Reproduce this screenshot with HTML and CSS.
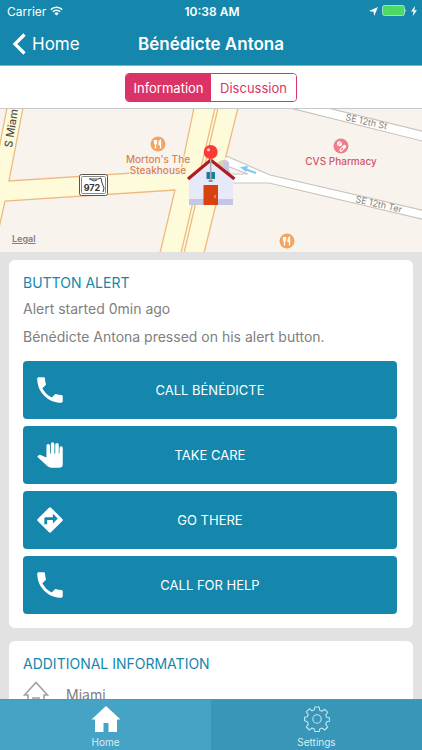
FILE: index.html
```html
<!DOCTYPE html>
<html lang="en">
<head>
    <meta charset="UTF-8">
    <meta name="viewport" content="width=device-width, initial-scale=1.0">
    <title>Bénédicte Antona</title>
    <link rel="stylesheet" href="styles.css">
</head>
<body>
    <!-- shared icons -->
    <svg class="sprite" aria-hidden="true">
        <symbol id="phone" viewBox="0 0 24 24">
            <path d="M6.62 10.79c1.44 2.83 3.76 5.14 6.59 6.59l2.2-2.2c.27-.27.67-.36 1.02-.24 1.12.37 2.33.57 3.57.57.55 0 1 .45 1 1V20c0 .55-.45 1-1 1-9.39 0-17-7.61-17-17 0-.55.45-1 1-1h3.5c.55 0 1 .45 1 1 0 1.25.2 2.45.57 3.57.11.35.03.74-.25 1.02l-2.2 2.2z"/>
        </symbol>
        <symbol id="fork" viewBox="0 0 16 16">
            <circle cx="8" cy="8" r="7.500" fill="#f2a563"/>
            <path d="M4.500 4v3q0 1 1 1.300V12.500M6.500 4v3q0 1-1 1.300M5.500 4v4M10.500 12.500V4q-1.600 1-1.600 4.500h1.600" fill="none" stroke="#fff" stroke-width="1.300" stroke-linejoin="round"/>
        </symbol>
    </svg>

    <header>
        <div class="status">
            <span class="carrier">Carrier
                <svg width="13" height="10" viewBox="0 0 13 10" fill="none" stroke="#fff" stroke-width="1.500">
                    <path d="M.8 3.600a8 8 0 0 1 11.400 0M2.800 5.800a5.300 5.300 0 0 1 7.400 0"/>
                    <path d="M6.500 9.600L4.300 7.400a3.200 3.200 0 0 1 4.400 0z" fill="#fff" stroke="none"/>
                </svg>
            </span>
            <time>10:38 AM</time>
            <span class="power">
                <svg width="9" height="9" viewBox="0 0 9 9" fill="#fff"><path d="M9 0L5.200 9 4.500 4.700 0 4z"/></svg>
                <svg width="25" height="12" viewBox="0 0 25 12">
                    <rect x=".5" y=".5" width="22" height="10" rx="2" fill="#4cd964" stroke="#9adfd0"/>
                    <path d="M23.500 4q1.500 1.500 0 3z" fill="#d5eef0"/>
                </svg>
                <svg width="6" height="10" viewBox="0 0 6 10" fill="#fff"><path d="M4 0L0 5.600h2.500L1.700 10 6 4.200H3.400z"/></svg>
            </span>
        </div>
        <div class="navbar">
            <a href="#" class="back">
                <svg width="14" height="22" viewBox="0 0 14 22" fill="none" stroke="#fff" stroke-width="3.200"><path d="M12.500 1.500L3 11l9.500 9.500"/></svg>
                Home
            </a>
            <h1>Bénédicte Antona</h1>
        </div>
    </header>

    <div class="switch">
        <div class="segments">
            <button class="on">Information</button>
            <button>Discussion</button>
        </div>
    </div>

    <main>
        <div class="map">
            <svg viewBox="0 0 422 143" preserveAspectRatio="xMidYMid slice">
                <rect width="422" height="143" fill="#f8f4ed"/>
                <!-- side streets -->
                <g fill="#fff" stroke="#c9c4bd" stroke-width="1.200">
                    <path d="M290-1L430 34V24L328-1z"/>
                    <path d="M224 46L270 66 430 103V112L269 74H222z"/>
                    <path d="M227 57L248 65H230z" fill="#f8f4ed"/>
                </g>
                <!-- main roads -->
                <g fill="#fdfbd9" stroke="#efb981" stroke-width="1.300">
                    <path d="M7-1L-3 50V128L5 92 175 81 160 144H204L221 75 226 47 238-1H194L181 61 9 72 23-1z"/>
                    <path d="M215-1L181 144M218-1L184 144" fill="none"/>
                </g>
                <path d="M222.500 72L226.500 49" stroke="#fff" stroke-width="3"/>
                <path d="M256 64L246 60.500" stroke="#7cc8f5" stroke-width="2"/>
                <path d="M240 58L248 57 246 63z" fill="#7cc8f5"/>

                <g class="street">
                    <text x="345" y="11" transform="rotate(13 345 11)">SE 12th St</text>
                    <text x="355" y="93" transform="rotate(13 355 93)">SE 12th Ter</text>
                    <text class="avenue" x="12" y="39" transform="rotate(-81 12 39)">S Miami</text>
                </g>

                <!-- route shield -->
                <rect x="79.500" y="65.500" width="28" height="21" rx="2" fill="#fff" stroke="#555"/>
                <rect x="81.500" y="67.500" width="24" height="17" rx="1" fill="#fff" stroke="#888"/>
                <path d="M89 70h9l3-1 1 5 2 5-1 4M90 70l4 2 3-1" fill="none" stroke="#444"/>
                <text class="route" x="92" y="82">972</text>

                <use href="#fork" x="150" y="27" width="16" height="16"/>
                <g class="place food">
                    <text x="158" y="54">Morton's The</text>
                    <text x="158" y="65">Steakhouse</text>
                </g>
                <use href="#fork" x="279" y="124" width="16" height="16"/>

                <circle cx="341" cy="37" r="7.500" fill="#ee7e8c"/>
                <circle cx="339.500" cy="34.800" r="2.500" fill="#fff"/>
                <path d="M337.800 36.500L341.200 33" stroke="#ee7e8c" stroke-width=".7"/>
                <path d="M341 41L344.500 37.500" stroke="#fff" stroke-width="3.200" stroke-linecap="round"/>
                <path d="M341.200 40.800L342.500 39.500" stroke="#ee7e8c" stroke-width="1.500" stroke-linecap="round"/>
                <text class="place health" x="341" y="56">CVS Pharmacy</text>

                <!-- house marker with pin -->
                <ellipse cx="221" cy="56" rx="8" ry="4" fill="#8b8878" opacity=".35" transform="rotate(-30 221 56)"/>
                <path d="M223.500 53h5.500v13h-5.500z" fill="#c5c6e6"/>
                <path d="M189 71L210.700 52 233 71V96H189z" fill="#e8e9f8"/>
                <path d="M189 90h44v6h-44z" fill="#c5c6e6"/>
                <path d="M203.500 76h14.500v20h-14.500z" fill="#d9410f"/>
                <path d="M215 86v3" stroke="#f5a58a" stroke-width="1.200"/>
                <path d="M206.500 63h8.500v7h-8.500z" fill="#197f99"/>
                <path d="M188 70L210.700 51 234.500 70" fill="none" stroke="#b01c22" stroke-width="3.200"/>
                <path d="M210.700 49V72" stroke="#a9adb3" stroke-width="1.500"/>
                <path d="M208.700 72h4" stroke="#777" stroke-width="1.500"/>
                <circle cx="210.700" cy="43" r="7" fill="#fb3a34"/>
                <circle cx="208.500" cy="40.800" r="1.600" fill="#ffc4bd"/>
            </svg>
            <a href="#" class="legal">Legal</a>
        </div>

        <section class="card">
            <h2>BUTTON ALERT</h2>
            <p>Alert started 0min ago</p>
            <p>Bénédicte Antona pressed on his alert button.</p>
            <div class="actions">
                <button>
                    <svg><use href="#phone"/></svg>
                    <span>CALL BÉNÉDICTE</span>
                </button>
                <button>
                    <svg viewBox="0 0 24 24">
                        <path d="M21 7v11.500q0 2.500-2.500 2.500H13q-1.700 0-2.900-1.200L3 13.200l1-1q.6-.5 1.400-.2l4.100 1.700V5.500a1.200 1.200 0 0 1 2.500 0V11h.6V4.200a1.200 1.200 0 0 1 2.500 0V11h.6V4.800a1.200 1.200 0 0 1 2.500 0V11h.5V7a1.150 1.150 0 0 1 2.300 0z"/>
                    </svg>
                    <span>TAKE CARE</span>
                </button>
                <button>
                    <svg viewBox="0 0 24 24">
                        <path fill-rule="evenodd" d="M20.700 11.300l-8-8a1 1 0 0 0-1.400 0l-8 8a1 1 0 0 0 0 1.400l8 8a1 1 0 0 0 1.400 0l8-8a1 1 0 0 0 0-1.400zM14 14.500V12h-4v3H8v-4c0-.55.45-1 1-1h5V7.500l3.500 3.500-3.500 3.500z"/>
                    </svg>
                    <span>GO THERE</span>
                </button>
                <button>
                    <svg><use href="#phone"/></svg>
                    <span>CALL FOR HELP</span>
                </button>
            </div>
        </section>

        <section class="card">
            <h2>ADDITIONAL INFORMATION</h2>
            <div class="place-row">
                <svg width="26" height="26" viewBox="0 0 26 26" fill="none" stroke="#a0a0a0" stroke-width="1.600"><path d="M1.500 14L13 1.500 24.500 14H21v10h-5v-7h-6v7H5V14z"/></svg>
                <span>Miami</span>
            </div>
        </section>
    </main>

    <nav class="tabs">
        <a href="#" class="active">
            <svg width="30" height="26" viewBox="0 0 30 26" fill="#fff"><path d="M15 0L29.500 13.500H26V26H17.500V17H12.500V26H4V13.500H.5z"/></svg>
            Home
        </a>
        <a href="#">
            <svg width="26" height="26" viewBox="0 0 26 26" fill="none" stroke="#c4e4ef" stroke-width="1.100" stroke-linejoin="round">
                <path d="M10.800 1h4.400l.5 3.300 2.300 1 2.700-2 3 3-2 2.700 1 2.300 2.700.5v3.400l-2.700.5-1 2.600 2 2.700-3 3-2.700-2-2.300 1-.5 2.500h-4.400l-.5-2.500-2.300-1-2.700 2-3-3 2-2.700-1-2.600L.6 14.700v-3.400l2.700-.5 1-2.300-2-2.700 3-3 2.700 2 2.300-1z"/>
                <circle cx="13" cy="13" r="4.200"/>
            </svg>
            Settings
        </a>
    </nav>
</body>
</html>
```
FILE: styles.css
```css
* {
    box-sizing: border-box;
}
body {
    margin: 0;
    height: 100vh;
    display: flex;
    flex-direction: column;
    font-family: Inter, "Liberation Sans", sans-serif;
    background-color: #e2e2e2;
    color: #808080;
}
a {
    color: inherit;
    text-decoration: none;
}
button {
    font-family: inherit;
    border: none;
    cursor: pointer;
}
.sprite {
    position: absolute;
    width: 0;
    height: 0;
}
header {
    background-color: #1587ac;
    color: white;
    border-bottom: 1px solid #7ab5ca;
}
.status, .navbar {
    display: grid;
    grid-template-columns: 1fr auto 1fr;
    align-items: center;
}
.status {
    height: 22px;
    padding: 0 5px 0 7px;
    font-size: 12px;
}
.status time {
    font-weight: 600;
}
.carrier, .power {
    display: flex;
    align-items: center;
    gap: 4px;
}
.power {
    justify-content: flex-end;
}
.navbar {
    height: 43px;
    padding: 0 12px;
}
.back {
    display: flex;
    align-items: center;
    gap: 6px;
    font-size: 17px;
}
h1 {
    margin: 0;
    font-size: 17px;
    font-weight: 600;
}
.switch {
    display: flex;
    justify-content: center;
    padding: 7px 7px 6px;
    background-color: white;
    border-bottom: 1px solid #c8c8c8;
}
.segments {
    display: flex;
    border: 1px solid #dc3366;
    border-radius: 4px;
    overflow: hidden;
}
.segments button {
    width: 85px;
    height: 27px;
    padding: 0;
    font-size: 13px;
    color: #dc3366;
    background-color: white;
}
.segments .on {
    color: white;
    background-color: #dc3366;
}
main {
    flex: 1;
    min-height: 0;
    overflow-y: auto;
    scrollbar-width: none;
}
.map {
    position: relative;
    height: 143px;
}
.map svg {
    display: block;
    width: 100%;
    height: 100%;
}
.street {
    font-size: 9px;
    fill: #85817c;
}
.avenue {
    font-size: 11px;
    font-weight: 500;
    fill: #55524e;
}
.route {
    font-size: 9px;
    font-weight: 700;
    fill: #333;
    text-anchor: middle;
}
.place {
    font-size: 10px;
    font-weight: 500;
    text-anchor: middle;
    stroke: #f8f4ed;
    stroke-width: 2px;
    paint-order: stroke;
}
.food {
    fill: #d9834f;
}
.health {
    fill: #d45468;
}
.legal {
    position: absolute;
    left: 12px;
    bottom: 8px;
    font-size: 9px;
    font-weight: 600;
    text-decoration: underline;
}
.card {
    margin: 8px 9px 13px;
    padding: 14px 16px 14px 14px;
    background-color: white;
    border-radius: 6px;
}
.card h2 {
    margin: 0 0 8px;
    font-size: 14px;
    line-height: 18px;
    font-weight: 400;
    color: #1587ac;
}
.card p {
    margin: 0 0 10px;
    font-size: 14px;
    line-height: 18px;
}
.actions {
    display: grid;
    gap: 7px;
    margin-top: 15px;
}
.actions button {
    display: grid;
    grid-template-columns: 34px 1fr 34px;
    align-items: center;
    height: 58px;
    padding: 0 10px;
    border-radius: 4px;
    background-color: #1587ac;
    color: white;
    font-size: 13px;
}
.actions svg {
    width: 34px;
    height: 34px;
    fill: white;
}
.place-row {
    display: flex;
    align-items: center;
    gap: 17px;
    font-size: 14px;
}
.place-row svg {
    flex: none;
}
.tabs {
    display: flex;
    height: 51px;
    background-color: #3896b9;
    border-top: 1px solid #5596ab;
}
.tabs a {
    flex: 1;
    display: flex;
    flex-direction: column;
    align-items: center;
    gap: 3px;
    padding-top: 6px;
    font-size: 10px;
    line-height: 14px;
    color: #d8eef5;
}
.tabs .active {
    background-color: #45a3c5;
}
```
